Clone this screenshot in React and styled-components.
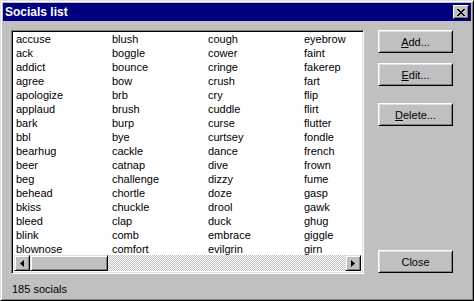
import React from "react";
import styled, { createGlobalStyle } from "styled-components";

const GlobalStyle = createGlobalStyle`
    html, body {
        margin: 0;
        padding: 0;
        background: #c0c0c0;
    }
    body {
        font-family: "Liberation Sans", Arial, sans-serif;
        font-size: 11px;
        color: #000;
    }
`;

const columns = [
    ["accuse", "ack", "addict", "agree", "apologize", "applaud", "bark", "bbl", "bearhug", "beer", "beg", "behead", "bkiss", "bleed", "blink", "blownose"],
    ["blush", "boggle", "bounce", "bow", "brb", "brush", "burp", "bye", "cackle", "catnap", "challenge", "chortle", "chuckle", "clap", "comb", "comfort"],
    ["cough", "cower", "cringe", "crush", "cry", "cuddle", "curse", "curtsey", "dance", "dive", "dizzy", "doze", "drool", "duck", "embrace", "evilgrin"],
    ["eyebrow", "faint", "fakerep", "fart", "flip", "flirt", "flutter", "fondle", "french", "frown", "fume", "gasp", "gawk", "ghug", "giggle", "girn"],
];

const Window = styled.div`
    box-sizing: border-box;
    width: 474px;
    height: 301px;
    display: flex;
    flex-direction: column;
    background: #c0c0c0;
    border-top: 1px solid #dfdfdf;
    border-left: 1px solid #dfdfdf;
    border-right: 1px solid #000;
    border-bottom: 1px solid #000;
    box-shadow: inset 1px 1px 0 #fff, inset -1px -1px 0 #808080;
    padding: 2px;
`;

const TitleBar = styled.div`
    height: 18px;
    display: flex;
    align-items: center;
    justify-content: space-between;
    background: #000080;
    padding: 0 2px 0 2px;
`;

const Title = styled.span`
    color: #fff;
    font-weight: bold;
    font-size: 12px;
`;

const CloseBox = styled.div`
    box-sizing: border-box;
    width: 16px;
    height: 14px;
    display: flex;
    align-items: center;
    justify-content: center;
    background: #c0c0c0;
    border-top: 1px solid #fff;
    border-left: 1px solid #fff;
    border-right: 1px solid #000;
    border-bottom: 1px solid #000;
    box-shadow: inset -1px -1px 0 #808080;
`;

const Body = styled.div`
    display: flex;
    padding: 9px 0 0 8px;
`;

const ListBox = styled.div`
    box-sizing: border-box;
    width: 353px;
    height: 244px;
    display: flex;
    flex-direction: column;
    background: #fff;
    border-top: 1px solid #808080;
    border-left: 1px solid #808080;
    border-right: 1px solid #fff;
    border-bottom: 1px solid #fff;
    box-shadow: inset 1px 1px 0 #000, inset -1px -1px 0 #dfdfdf;
    padding: 2px;
`;

const Items = styled.div`
    flex: 1;
    display: grid;
    grid-template-columns: repeat(4, 96px);
    padding: 0 0 0 2px;
    overflow: hidden;
`;

const Column = styled.div`
    display: flex;
    flex-direction: column;
`;

const Item = styled.div`
    height: 14px;
    line-height: 12px;
    white-space: nowrap;
`;

const HScroll = styled.div`
    height: 16px;
    display: flex;
`;

const Raised = styled.div`
    box-sizing: border-box;
    width: ${(props) => props.width || 16}px;
    height: 16px;
    display: flex;
    align-items: center;
    justify-content: center;
    background: #c0c0c0;
    border-top: 1px solid #dfdfdf;
    border-left: 1px solid #dfdfdf;
    border-right: 1px solid #000;
    border-bottom: 1px solid #000;
    box-shadow: inset 1px 1px 0 #fff, inset -1px -1px 0 #808080;
`;

const Track = styled.div`
    flex: 1;
    background-color: #c0c0c0;
    background-image: conic-gradient(#fff 25%, #c0c0c0 0 50%, #fff 0 75%, #c0c0c0 0);
    background-size: 2px 2px;
`;

const Buttons = styled.div`
    display: flex;
    flex-direction: column;
    margin-left: 14px;
    height: 243px;
`;

const Button = styled.div`
    box-sizing: border-box;
    width: 75px;
    height: 23px;
    margin-top: ${(props) => props.gap || 0}px;
    display: flex;
    align-items: center;
    justify-content: center;
    background: #c0c0c0;
    border-top: 1px solid #fff;
    border-left: 1px solid #fff;
    border-right: 1px solid #000;
    border-bottom: 1px solid #000;
    box-shadow: inset 1px 1px 0 #dfdfdf, inset -1px -1px 0 #808080;
    padding-top: 1px;
`;

const Spacer = styled.div`
    flex: 1;
`;

const Key = styled.span`
    text-decoration: underline;
`;

const Status = styled.div`
    padding: 8px 0 0 9px;
    line-height: 14px;
`;

const ArrowLeft = () => (
    <svg width="4" height="7" viewBox="0 0 4 7">
        <path d="M0 3.5 L4 0 L4 7 Z" fill="#000" />
    </svg>
);

const ArrowRight = () => (
    <svg width="4" height="7" viewBox="0 0 4 7">
        <path d="M4 3.5 L0 0 L0 7 Z" fill="#000" />
    </svg>
);

const CloseGlyph = () => (
    <svg width="8" height="7" viewBox="0 0 8 7" shapeRendering="crispEdges">
        <path d="M0 0h2v1h-2zM6 0h2v1h-2zM1 1h2v1h-2zM5 1h2v1h-2zM2 2h4v1h-4zM3 3h2v1h-2zM2 4h4v1h-4zM1 5h2v1h-2zM5 5h2v1h-2zM0 6h2v1h-2zM6 6h2v1h-2z" fill="#000" />
    </svg>
);

export default function App() {
    return (
        <>
            <GlobalStyle />
            <Window>
                <TitleBar>
                    <Title>Socials list</Title>
                    <CloseBox><CloseGlyph /></CloseBox>
                </TitleBar>
                <Body>
                    <ListBox>
                        <Items>
                            {columns.map((col, i) => (
                                <Column key={i}>
                                    {col.map((name) => <Item key={name}>{name}</Item>)}
                                </Column>
                            ))}
                        </Items>
                        <HScroll>
                            <Raised><ArrowLeft /></Raised>
                            <Raised width={78} />
                            <Track />
                            <Raised><ArrowRight /></Raised>
                        </HScroll>
                    </ListBox>
                    <Buttons>
                        <Button><span><Key>A</Key>dd...</span></Button>
                        <Button gap={10}><span><Key>E</Key>dit...</span></Button>
                        <Button gap={17}><span><Key>D</Key>elete...</span></Button>
                        <Spacer />
                        <Button>Close</Button>
                    </Buttons>
                </Body>
                <Status>185 socials</Status>
            </Window>
        </>
    );
}
